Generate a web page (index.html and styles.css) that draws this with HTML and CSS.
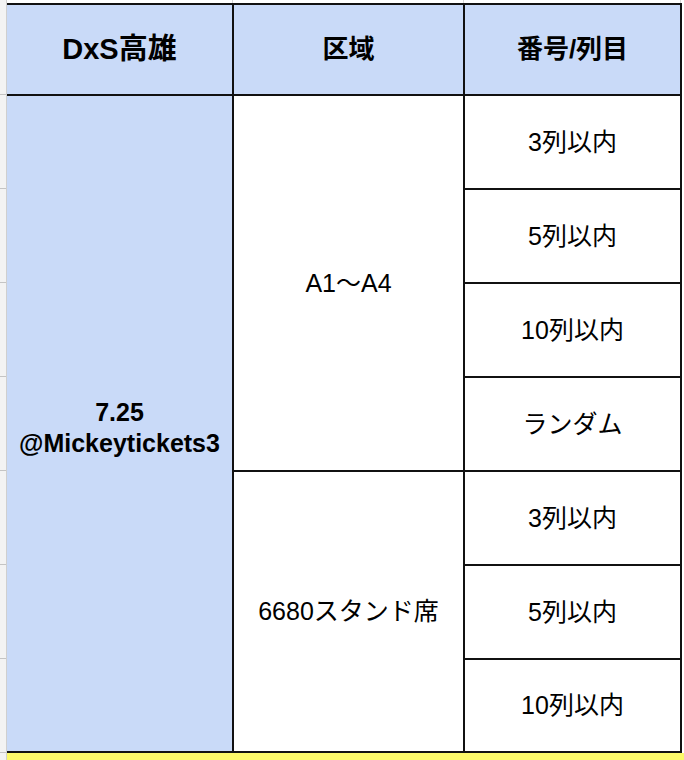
FILE: index.html
```html
<!DOCTYPE html>
<html lang="ja">
<head>
<meta charset="utf-8">
<title>DxS高雄</title>
<link rel="stylesheet" href="styles.css">
</head>
<body>
<div class="sheet">
  <div class="gutter">
    <div class="g g-top"></div>
    <div class="g"></div>
    <div class="g"></div>
    <div class="g"></div>
    <div class="g"></div>
    <div class="g"></div>
    <div class="g"></div>
    <div class="g"></div>
    <div class="g g-end"></div>
  </div>
  <div class="main">
    <div class="topstrip">
      <div class="ts"></div>
      <div class="ts"></div>
      <div class="ts"></div>
    </div>
    <div class="table">
      <div class="cell head head-event">DxS高雄</div>
      <div class="cell head">区域</div>
      <div class="cell head">番号/列目</div>
      <div class="cell date">7.25<br>@Mickeytickets3</div>
      <div class="cell zone zone-a">A1～A4</div>
      <div class="cell seat">3列以内</div>
      <div class="cell seat">5列以内</div>
      <div class="cell seat">10列以内</div>
      <div class="cell seat">ランダム</div>
      <div class="cell zone zone-b">6680スタンド席</div>
      <div class="cell seat">3列以内</div>
      <div class="cell seat">5列以内</div>
      <div class="cell seat">10列以内</div>
    </div>
    <div class="yellow"></div>
  </div>
</div>
</body>
</html>
```
FILE: styles.css
```css
html, body {
  margin: 0;
  padding: 0;
  background: #ffffff;
}

body {
  font-family: "Liberation Sans", Arial, "Noto Sans CJK JP", sans-serif;
  color: #000000;
  width: 684px;
  height: 760px;
  overflow: hidden;
}

.sheet {
  display: flex;
  align-items: flex-start;
  height: 760px;
  overflow: hidden;
}

.gutter {
  width: 6px;
  border-right: 1px solid #cfcfcf;
  background: #f3f3f3;
  display: flex;
  flex-direction: column;
  height: 760px;
  overflow: hidden;
}

.g {
  height: 93px;
  border-bottom: 1px solid #c4c4c4;
  flex: none;
}

.g-top {
  height: 94px;
}

.g-end {
  height: 7px;
  border-bottom: none;
}

.main {
  flex: 1;
  display: flex;
  flex-direction: column;
}

.topstrip {
  height: 3px;
  display: grid;
  grid-template-columns: 226px 231px 217px;
}

.ts {
  border-right: 1px solid #d4d4d4;
}

.table {
  display: grid;
  width: max-content;
  grid-template-columns: 225px 229px 215px;
  grid-template-rows: 89px repeat(6, 92px) 91px;
  gap: 2px;
  padding: 2px 2px 2px 0;
  background: #111111;
}

.cell {
  display: flex;
  align-items: center;
  justify-content: center;
  text-align: center;
  background: #ffffff;
  font-size: 25px;
  line-height: 31px;
}

.head {
  background: #c9daf8;
  font-weight: bold;
  font-size: 26px;
}

.head-event {
  font-size: 29px;
}

.date {
  grid-row: 2 / span 7;
  background: #c9daf8;
  font-weight: bold;
  padding-top: 9px;
}

.zone-a {
  grid-row: 2 / span 4;
}

.zone-b {
  grid-row: 6 / span 3;
}

.yellow {
  height: 7px;
  background: #fcf96a;
}
```
